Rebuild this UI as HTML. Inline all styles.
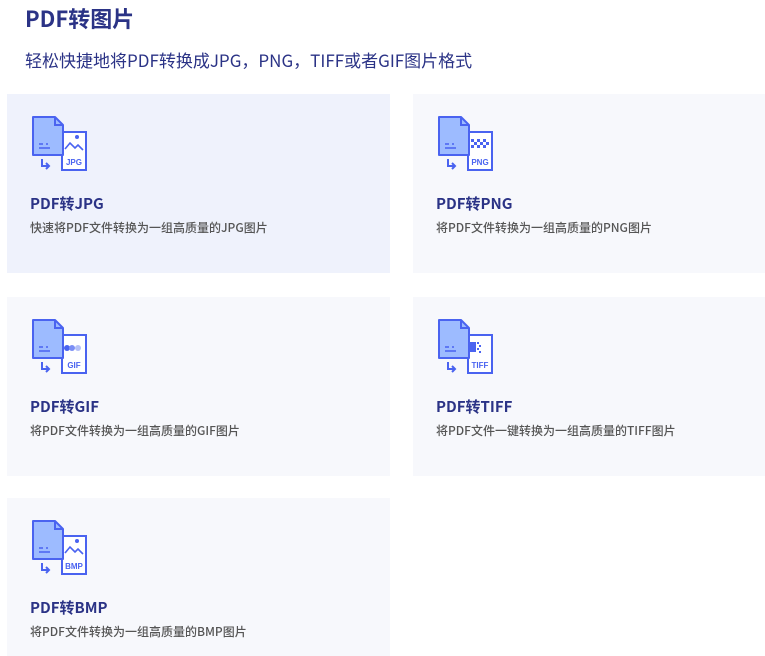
<!DOCTYPE html>
<html><head><meta charset="utf-8"><style>
*{margin:0;padding:0;box-sizing:border-box}
body{width:765px;height:656px;background:#fff;font-family:"Noto Sans CJK SC",sans-serif;position:relative;overflow:hidden;line-height:1.2}
h1{position:absolute;left:25px;top:5px;font-size:22px;font-weight:bold;color:#2b3386}
.sub{position:absolute;left:25px;top:50px;font-size:17px;color:#2b3386}
.card{position:absolute;background:#f7f8fc}
.card svg{position:absolute;left:24px;top:21px}
.t{position:absolute;left:23px;top:101px;font-size:15px;font-weight:bold;color:#2b3386}
.d{position:absolute;left:23px;top:127px;font-size:12px;color:#555;font-weight:500}
</style></head><body>
<h1>PDF转图片</h1>
<div class="sub">轻松快捷地将PDF转换成JPG，PNG，TIFF或者GIF图片格式</div>

<svg width="0" height="0" style="position:absolute">
<defs>
<g id="base">
<rect x="31" y="17" width="24" height="38" fill="#fff" stroke="#4a63f0" stroke-width="2"/>
<path d="M2 2H24L32 10V40H2Z" fill="#9dbbff" stroke="#4a63f0" stroke-width="2" stroke-linejoin="round"/>
<path d="M24 2V10H32" fill="none" stroke="#4a63f0" stroke-width="2"/>
<path d="M8 29H12M8 33H19M15 29H17" stroke="#4a63f0" stroke-width="1.6"/>
<path d="M11 44V51H18M15 48L18 51L15 54" fill="none" stroke="#4a63f0" stroke-width="2"/>
</g>
</defs></svg>

<div class="card" style="left:7px;top:94px;width:383px;height:179px;background:#eff2fc">
<svg width="60" height="60"><use href="#base"/><path d="M34 34L39 28L44 33L47 30L52 35" fill="none" stroke="#4a63f0" stroke-width="1.6"/><circle cx="46" cy="22" r="2" fill="#4a63f0"/><text x="43" y="50" font-size="8" font-weight="bold" fill="#4a63f0" text-anchor="middle" font-family="Liberation Sans">JPG</text></svg>
<div class="t">PDF转JPG</div><div class="d">快速将PDF文件转换为一组高质量的JPG图片</div></div>

<div class="card" style="left:413px;top:94px;width:352px;height:179px">
<svg width="60" height="60"><use href="#base"/><path d="M34 24h3v3h-3zM40 24h3v3h-3zM46 24h3v3h-3zM37 27h3v3h-3zM43 27h3v3h-3zM49 27h3v3h-3zM34 30h3v3h-3zM40 30h3v3h-3zM46 30h3v3h-3z" fill="#4a63f0"/><text x="43" y="50" font-size="8" font-weight="bold" fill="#4a63f0" text-anchor="middle" font-family="Liberation Sans">PNG</text></svg>
<div class="t">PDF转PNG</div><div class="d">将PDF文件转换为一组高质量的PNG图片</div></div>

<div class="card" style="left:7px;top:297px;width:383px;height:179px">
<svg width="60" height="60"><use href="#base"/><circle cx="36" cy="30" r="3" fill="#4a63f0"/><circle cx="41" cy="30" r="3" fill="#7b8ef5"/><circle cx="47" cy="30" r="3" fill="#b4c0f7"/><text x="43" y="50" font-size="8" font-weight="bold" fill="#4a63f0" text-anchor="middle" font-family="Liberation Sans">GIF</text></svg>
<div class="t">PDF转GIF</div><div class="d">将PDF文件转换为一组高质量的GIF图片</div></div>

<div class="card" style="left:413px;top:297px;width:352px;height:179px">
<svg width="60" height="60"><use href="#base"/><path d="M33 24h6v10h-6zM40 24h2v2h-2zM42 27h2v2h-2zM40 30h2v2h-2zM42 33h2v2h-2z" fill="#4a63f0"/><text x="43" y="50" font-size="8" font-weight="bold" fill="#4a63f0" text-anchor="middle" font-family="Liberation Sans">TIFF</text></svg>
<div class="t">PDF转TIFF</div><div class="d">将PDF文件一键转换为一组高质量的TIFF图片</div></div>

<div class="card" style="left:7px;top:498px;width:383px;height:158px">
<svg width="60" height="60"><use href="#base"/><path d="M34 34L39 28L44 33L47 30L52 35" fill="none" stroke="#4a63f0" stroke-width="1.6"/><circle cx="46" cy="22" r="2" fill="#4a63f0"/><text x="43" y="50" font-size="8" font-weight="bold" fill="#4a63f0" text-anchor="middle" font-family="Liberation Sans">BMP</text></svg>
<div class="t">PDF转BMP</div><div class="d">将PDF文件转换为一组高质量的BMP图片</div></div>
</body></html>
